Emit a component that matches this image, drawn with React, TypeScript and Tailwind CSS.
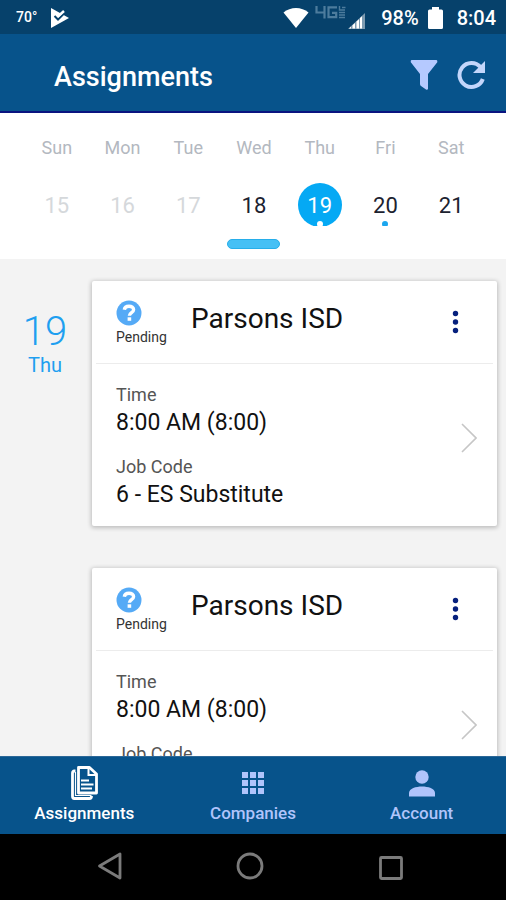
const days = [
  { name: "Sun", date: 15, past: true },
  { name: "Mon", date: 16, past: true },
  { name: "Tue", date: 17, past: true },
  { name: "Wed", date: 18, today: true },
  { name: "Thu", date: 19, selected: true, marked: true },
  { name: "Fri", date: 20, marked: true },
  { name: "Sat", date: 21 },
];

const assignments = [
  {
    id: 1,
    day: "19",
    weekday: "Thu",
    company: "Parsons ISD",
    status: "Pending",
    time: "8:00 AM (8:00)",
    jobCode: "6 - ES Substitute",
  },
  {
    id: 2,
    company: "Parsons ISD",
    status: "Pending",
    time: "8:00 AM (8:00)",
    jobCode: "6 - ES Substitute",
  },
];

function StatusBar() {
  return (
    <div className="flex h-[34px] shrink-0 items-center bg-[#06416b] pl-4 pr-[10px] pt-px font-medium text-white">
      <span className="text-[14px]">70°</span>
      <svg className="ml-[14px] h-5 w-[18px]" viewBox="0 0 18 20" fill="none">
        <path d="M0 0 18 10 0 20Z" fill="#fff" />
        <path d="M3.5 8 7 11.5 16 2.5" stroke="#06416b" strokeWidth="2" />
        <path d="M9 1 16 1 11 5.5Z" fill="#06416b" />
        <path d="M5.5 5.5 7.5 8 13 3" stroke="#fff" strokeWidth="2.5" />
      </svg>
      <div className="ml-auto flex items-center">
        <svg className="h-5 w-[26px]" viewBox="0 0 26 20" fill="#fff">
          <path d="M13 20 .5 4.5C4 1.600 8.400 0 13 0s9 1.600 12.500 4.500Z" />
        </svg>
        <svg className="ml-[6px] h-6 w-[51px]" viewBox="0 0 51 24" fill="none">
          <g stroke="#4d7c9d" strokeWidth="2.200">
            <path d="M1.500 0v6.500H10.500M9.500 0v12.500" />
            <path d="M22 1.300h-8.500v9.800h7.700V6.800H17" />
          </g>
          <g stroke="#4d7c9d" strokeWidth="1.400">
            <path d="M24.500 0v4h5.500M24 6.500h6M24 9h6M24 11.500h6M27 1.500h3.500" />
          </g>
          <path d="M33 23 50 7v16Z" fill="#7d9bb1" />
          <path d="M34 22.500h2v-2zM37.500 22.500h2.500v-5.500l-2.500 2.200zM41.500 22.500H44v-9.300l-2.500 2.300zM45 22.500h2V10.300l-2 1.800z" fill="#fff" />
        </svg>
        <span className="ml-[15px] text-[20px]">98%</span>
        <svg className="ml-[9px] h-[22px] w-[15px]" viewBox="0 0 15 22" fill="#fff">
          <path d="M4 0h7v2.500h2.500Q15 2.500 15 4v16.500q0 1.500-1.500 1.500h-12Q0 22 0 20.500V4q0-1.500 1.500-1.500H4Z" />
        </svg>
        <span className="ml-[14px] text-[20px]">8:04</span>
      </div>
    </div>
  );
}

function Header() {
  return (
    <header className="flex h-[79px] shrink-0 items-center border-b-2 border-[#0a1480] bg-[#07538b] pl-[54px] pr-5 pt-1">
      <h1 className="pt-1 text-[27px] font-medium leading-9 text-white">Assignments</h1>
      <button type="button" aria-label="Filter" className="ml-auto">
        <svg className="h-8 w-7" viewBox="0 0 28 32" fill="#b5c9ff">
          <path d="M1.500 1h25q1.200.2.800 2.200L18 15v15q-.6 1.200-2 .5L11 27q-1-.6-1-2V15L.8 3.200Q.3 1.500 1.500 1Z" />
        </svg>
      </button>
      <button type="button" aria-label="Refresh" className="ml-[19px]">
        <svg className="h-[30px] w-[29px]" viewBox="0 0 29 30" fill="none">
          <path d="M25.800 19A12 12 0 1 1 23.500 7" stroke="#c3d6fb" strokeWidth="4" />
          <path d="M28 1v12H16Z" fill="#c3d6fb" />
        </svg>
      </button>
    </header>
  );
}

function WeekStrip() {
  return (
    <section className="grid h-[146px] shrink-0 grid-cols-7 bg-white pl-6 pr-[22px] pt-[23px]">
      {days.map((day) => (
        <div key={day.name} className="flex flex-col items-center">
          <span className="text-[18px] leading-6 text-[#b3b8c0]">{day.name}</span>
          <button
            type="button"
            className={`relative mt-[23px] h-[43px] w-11 overflow-hidden pt-[2px] text-[22px] ${
              day.selected ? "text-white" : day.past ? "text-[#d5d8db]" : "text-[#1c2230]"
            }`}
          >
            {day.selected && (
              <span className="absolute left-0 top-0 h-11 w-11 rounded-full bg-[#05a9f4]" />
            )}
            <span className="relative">{day.date}</span>
            {day.marked && (
              <span
                className={`absolute -bottom-px left-1/2 h-[6px] w-[6px] -translate-x-1/2 rounded-full ${
                  day.selected ? "bg-white" : "bg-[#1ba6ee]"
                }`}
              />
            )}
          </button>
          {day.today && (
            <span className="mt-[13px] h-[10px] w-[53px] rounded-full border border-[#27aeea] bg-[#46c0f5]" />
          )}
        </div>
      ))}
    </section>
  );
}

function AssignmentCard({ item }: { item: (typeof assignments)[number] }) {
  return (
    <article className="flex">
      <div className="flex w-[92px] shrink-0 flex-col items-center pr-[2px] pt-7 text-[#1e9ff0]">
        {item.day && (
          <>
            <span className="text-[40px] font-light leading-[46px]">{item.day}</span>
            <span className="text-[20px] leading-5">{item.weekday}</span>
          </>
        )}
      </div>
      <div className="flex-1 rounded-xs bg-white shadow-[0_1px_4px_1px_rgba(0,0,0,0.22)]">
        <div className="mx-1 flex h-[83px] border-b border-[#ececec] pl-5 pr-[34px] pt-[19px]">
          <div className="w-[75px]">
            <svg className="h-[26px] w-[26px]" viewBox="0 0 26 26" fill="none">
              <circle cx="13" cy="13" r="12.500" fill="#55aaf6" />
              <path
                d="M8.300 9.800C8.600 7.500 10.500 6.200 13 6.200c2.700 0 4.600 1.400 4.600 3.500 0 2.900-4.200 2.900-4.200 6"
                stroke="#fff"
                strokeWidth="3.400"
              />
              <path d="M11.600 17.300h3.600v3.500h-3.600z" fill="#fff" />
            </svg>
            <p className="text-[14px] leading-[22px] text-[#333]">{item.status}</p>
          </div>
          <h2 className="text-[28px] leading-[38px] text-[#111]">{item.company}</h2>
          <button type="button" aria-label="More options" className="ml-auto self-start pt-[10px]">
            <svg className="h-6 w-[7px]" viewBox="0 0 7 24" fill="#06207d">
              <circle cx="3.500" cy="3.500" r="2.700" />
              <circle cx="3.500" cy="12" r="2.700" />
              <circle cx="3.500" cy="20.500" r="2.700" />
            </svg>
          </button>
        </div>
        <div className="flex h-[162px] items-start pl-6 pr-5 pt-[19px]">
          <dl>
            <dt className="text-[18px] leading-6 text-[#555]">Time</dt>
            <dd className="text-[23px] leading-8 text-[#111]">{item.time}</dd>
            <dt className="mt-4 text-[18px] leading-6 text-[#555]">Job Code</dt>
            <dd className="text-[23px] leading-8 text-[#111]">{item.jobCode}</dd>
          </dl>
          <button type="button" aria-label="Open assignment" className="ml-auto mt-10">
            <svg className="h-[30px] w-4" viewBox="0 0 16 30" fill="none" stroke="#c6c6c6" strokeWidth="1.600">
              <path d="M1 1 15 15 1 29" />
            </svg>
          </button>
        </div>
      </div>
    </article>
  );
}

function TabBar() {
  return (
    <nav className="grid h-[78px] shrink-0 grid-cols-3 border-t border-[#2b6797] bg-[#07538b] text-[17px] font-medium leading-6 text-[#b0c4fb]">
      <a href="#assignments" className="flex flex-col items-center pt-2 text-white">
        <svg className="h-9 w-7" viewBox="0 0 28 36" fill="none" stroke="#fff">
          <path d="M8.500 2.500h11L26.500 9v19H8.500Z" strokeWidth="2.800" strokeLinejoin="round" />
          <path d="M18.500 3v7H26" strokeWidth="2" />
          <path d="M5.500 6H4.300Q2.500 6 2.500 8.300v23Q2.500 33.500 4.300 33.500H19.500q2 0 2-2.500" strokeWidth="2.800" />
          <path d="M5.500 7v23.500h16" strokeWidth="1.200" />
          <path d="M11 15.500h8M11 19.500h12.500M11 23.500h11" strokeWidth="2.200" />
        </svg>
        <span>Assignments</span>
      </a>
      <a href="#companies" className="flex flex-col items-center pt-2">
        <svg className="h-9 w-[22px]" viewBox="0 0 22 36" fill="#b0c4fb">
          <path d="M0 7h6v6H0zM8 7h6v6H8zM16 7h6v6h-6zM0 15h6v6H0zM8 15h6v6H8zM16 15h6v6h-6zM0 23h6v6H0zM8 23h6v6H8zM16 23h6v6h-6z" />
        </svg>
        <span>Companies</span>
      </a>
      <a href="#account" className="flex flex-col items-center pt-2">
        <svg className="h-9 w-[26px]" viewBox="0 0 26 36" fill="#b0c4fb">
          <circle cx="13" cy="12" r="6.700" />
          <path d="M0 31.500v-3.500C0 23.500 7 21.500 13 21.500s13 2 13 6.500v3.500Z" />
        </svg>
        <span>Account</span>
      </a>
    </nav>
  );
}

function SystemNav() {
  return (
    <div className="flex h-[66px] shrink-0 items-center justify-center gap-28 bg-black pb-[2px] pr-[6px]">
      <button type="button" aria-label="Back">
        <svg className="h-7 w-7" viewBox="0 0 28 28" fill="none" stroke="#7b7b7b" strokeWidth="2.800">
          <path d="M24 2v24L3.500 14Z" strokeLinejoin="round" />
        </svg>
      </button>
      <button type="button" aria-label="Home">
        <svg className="h-7 w-7" viewBox="0 0 28 28" fill="none" stroke="#7b7b7b" strokeWidth="2.800">
          <circle cx="14" cy="14" r="12" />
        </svg>
      </button>
      <button type="button" aria-label="Recent apps">
        <svg className="h-7 w-7" viewBox="0 0 28 28" fill="none" stroke="#7b7b7b" strokeWidth="2.800">
          <rect x="4.500" y="5.500" width="21" height="21" rx="1" />
        </svg>
      </button>
    </div>
  );
}

export default function App() {
  return (
    <div className="flex h-screen flex-col bg-[#f3f3f3] font-[Roboto,sans-serif]">
      <StatusBar />
      <Header />
      <WeekStrip />
      <main className="min-h-0 flex-1 space-y-[42px] overflow-hidden pr-[9px] pt-[22px]">
        {assignments.map((item) => (
          <AssignmentCard key={item.id} item={item} />
        ))}
      </main>
      <TabBar />
      <SystemNav />
    </div>
  );
}
